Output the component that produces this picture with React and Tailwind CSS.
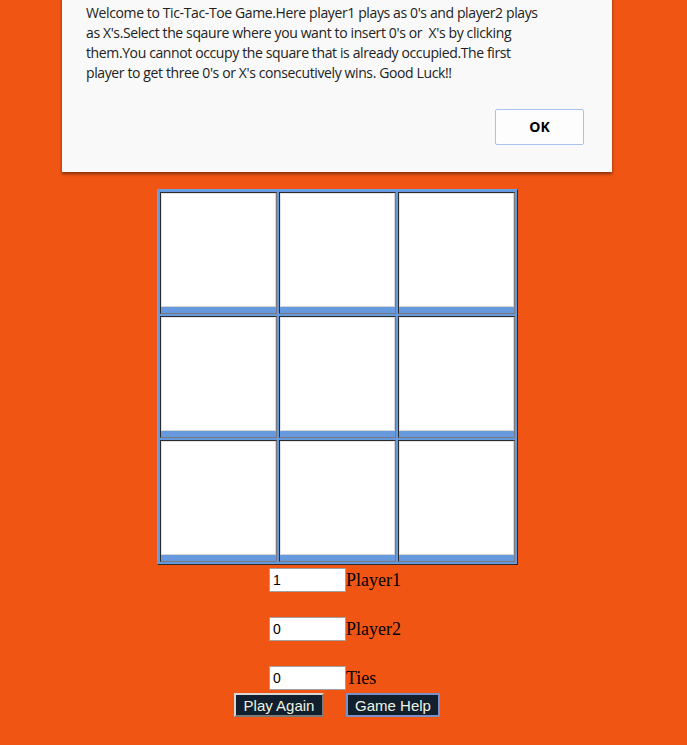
const cells = [0, 1, 2, 3, 4, 5, 6, 7, 8];

const lines = [
  "Welcome to Tic-Tac-Toe Game.Here player1 plays as 0's and player2 plays",
  "as X's.Select the sqaure where you want to insert 0's or \u00a0X's by clicking",
  "them.You cannot occupy the square that is already occupied.The first",
  "player to get three 0's or X's consecutively wins. Good Luck!!",
];

function Cell() {
  return (
    <div className="flex h-[122px] flex-col border border-t-[#2b2b2b] border-l-[#2b2b2b] border-r-[#7a7a7a] border-b-[#7a7a7a] bg-[#6699dd]">
      <button className="h-[114px] w-full shrink-0 border border-t-[#e4e4e4] border-l-[#e4e4e4] border-r-[#d6d6d6] border-b-[#d6d6d6] bg-white" />
    </div>
  );
}

function Score({ value, label }) {
  return (
    <div className="ml-[269px] flex items-center">
      <input
        readOnly
        value={value}
        className="h-6 w-[77px] border border-[#a0a0a0] bg-white px-[3px] text-[14px] text-black outline-none"
        style={{ fontFamily: "'Liberation Sans', Arial, sans-serif" }}
      />
      <span className="text-[18px] leading-6 text-black" style={{ fontFamily: "'Liberation Serif', 'Times New Roman', serif" }}>
        {label}
      </span>
    </div>
  );
}

export default function App() {
  return (
    <div className="relative min-h-[745px] overflow-hidden bg-[#f05514]">
      <div
        className="absolute left-[62px] top-[-40px] h-[212px] w-[550px] bg-[#f9f9f9] px-6 pt-[43px] text-[14px] leading-5 text-[#222] shadow-[0_2px_3px_rgba(0,0,0,0.45)]"
        style={{ fontFamily: "'Open Sans', 'Noto Sans', sans-serif" }}
      >
        {lines.map((l, i) => (
          <div key={i} className="whitespace-nowrap tracking-[-0.38px]">{l}</div>
        ))}
        <div className="mr-1 mt-[26px] flex justify-end">
          <button className="h-[36px] w-[89px] rounded-[2px] border border-[#a9c3ef] bg-[#fdfdfd] text-[14px] font-bold text-black">
            OK
          </button>
        </div>
      </div>

      <div className="w-[675px] pt-[189px]">
        <div className="ml-[157px] grid w-[361px] grid-cols-3 gap-[2px] border border-t-[#6f9fe0] border-l-[#6f9fe0] border-r-[#2b2b2b] border-b-[#2b2b2b] bg-[#6699dd] p-[2px]">
          {cells.map((c) => (
            <Cell key={c} />
          ))}
        </div>

        <div className="mt-[3px] flex flex-col gap-[25px]">
          <Score value="1" label="Player1" />
          <Score value="0" label="Player2" />
          <Score value="0" label="Ties" />
        </div>

        <div className="ml-[234px] mt-[3px] flex gap-[22px]" style={{ fontFamily: "'Liberation Sans', Arial, sans-serif" }}>
          <button className="h-6 w-[90px] border-2 border-t-[#d8d8d8] border-l-[#d8d8d8] border-r-[#7a7a7a] border-b-[#7a7a7a] bg-[#12202d] text-[15px] leading-none text-[#eef3e4]">
            Play Again
          </button>
          <button className="h-6 w-[94px] border-2 border-[#7b8fc8] bg-[#12202d] text-[15px] leading-none text-[#eef3e4]">
            Game Help
          </button>
        </div>
      </div>
    </div>
  );
}
